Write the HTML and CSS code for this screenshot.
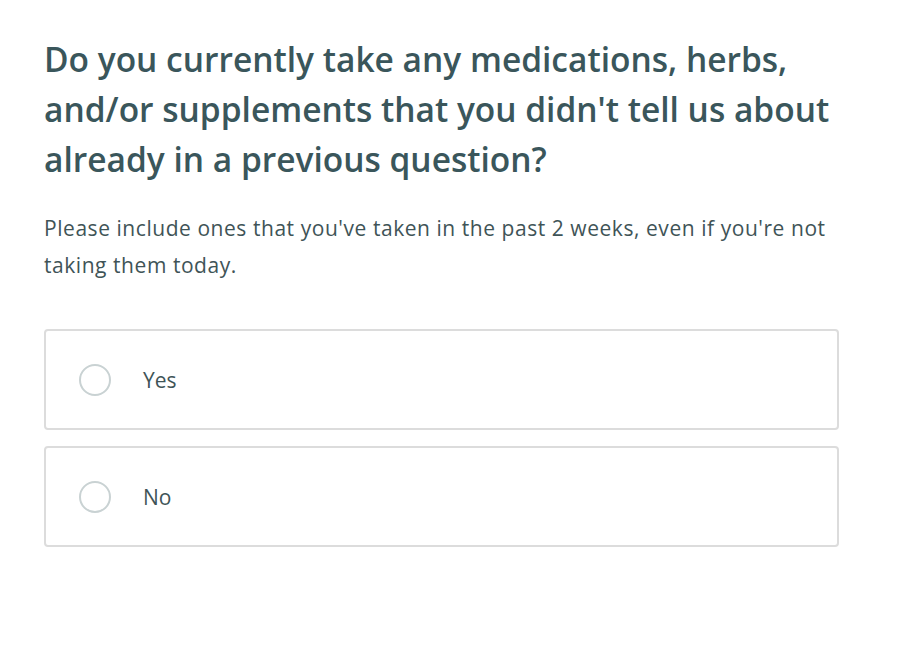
FILE: index.html
```html
<!DOCTYPE html>
<html lang="en">
<head>
<meta charset="utf-8">
<title>Question</title>
<link rel="stylesheet" href="styles.css">
</head>
<body>
<main class="page">
  <h1 class="title">Do you currently take any medications, herbs, and/or supplements that you didn't tell us about already in a previous question?</h1>
  <p class="hint">Please include ones that you've taken in the past 2 weeks, even if you're not taking them today.</p>
  <div class="options">
    <label class="option"><span class="radio"></span><span class="label">Yes</span></label>
    <label class="option"><span class="radio"></span><span class="label">No</span></label>
  </div>
</main>
</body>
</html>
```
FILE: styles.css
```css
html, body {
  margin: 0;
  padding: 0;
  background: #ffffff;
}
body {
  font-family: "Open Sans", "Lato", sans-serif;
  color: #3c5559;
}
.page {
  width: 795px;
  padding: 34px 0 0 44px;
}
.title {
  margin: 0;
  font-size: 33.5px;
  font-weight: 600;
  line-height: 50px;
  color: #3a565b;
  letter-spacing: 0;
}
.hint {
  width: 810px;
  margin: 26px 0 0 0;
  font-size: 21px;
  line-height: 37px;
  font-weight: 400;
  letter-spacing: 0.55px;
  color: #3f5457;
}
.options {
  margin-top: 45px;
  display: flex;
  flex-direction: column;
  gap: 16px;
}
.option {
  display: flex;
  align-items: center;
  height: 101px;
  box-sizing: border-box;
  border: 2px solid #dcdcdc;
  border-radius: 4px;
  padding-left: 33px;
}
.radio {
  width: 32px;
  height: 32px;
  box-sizing: border-box;
  border: 2px solid #c9d2d3;
  border-radius: 50%;
  flex: none;
}
.label {
  margin-left: 32px;
  font-size: 21px;
  color: #3f5457;
}
```
